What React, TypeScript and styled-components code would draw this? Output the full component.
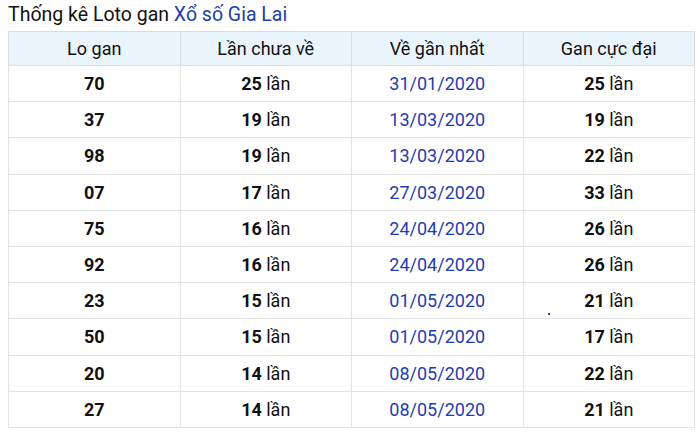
import styled, { createGlobalStyle } from 'styled-components'

const GlobalStyle = createGlobalStyle`
  body {
    margin: 0;
    background: #fff;
    font-family: Roboto, "Liberation Sans", sans-serif;
    color: #111;
  }
`

const Wrap = styled.section`
  position: relative;
  padding: 2px 5px 0 8px;
`

const Title = styled.h2`
  margin: 0 0 4px;
  font-size: 19.5px;
  font-weight: 400;
  line-height: 25px;
  color: #111;
`

const TitleLink = styled.span`
  color: #1c3faa;
`

const Table = styled.table`
  width: 687px;
  border-collapse: collapse;
  table-layout: fixed;
  font-size: 18px;
`

const HeadCell = styled.th`
  height: 33px;
  padding: 0;
  background: #eaf4fc;
  border: 1px solid #dcdcdc;
  font-weight: 400;
  text-align: center;
`

const Cell = styled.td<{ $blue?: boolean }>`
  height: 35.2px;
  padding: 0;
  border: 1px solid #e2e2e2;
  text-align: center;
  color: ${({ $blue }) => ($blue ? '#1f3cb0' : '#111')};
`

const Num = styled.b`
  font-weight: 700;
`

// stray cursor speck seen over the table
const Speck = styled.i`
  position: absolute;
  left: 548px;
  top: 313px;
  width: 2px;
  height: 2px;
  background: #3a3ad0;
`

const rows = [
  ['70', '25', '31/01/2020', '25'],
  ['37', '19', '13/03/2020', '19'],
  ['98', '19', '13/03/2020', '22'],
  ['07', '17', '27/03/2020', '33'],
  ['75', '16', '24/04/2020', '26'],
  ['92', '16', '24/04/2020', '26'],
  ['23', '15', '01/05/2020', '21'],
  ['50', '15', '01/05/2020', '17'],
  ['20', '14', '08/05/2020', '22'],
  ['27', '14', '08/05/2020', '21'],
]

export default function App() {
  return (
    <Wrap>
      <GlobalStyle />
      <Title>
        Thống kê Loto gan <TitleLink>Xổ số Gia Lai</TitleLink>
      </Title>
      <Table>
        <thead>
          <tr>
            <HeadCell>Lo gan</HeadCell>
            <HeadCell>Lần chưa về</HeadCell>
            <HeadCell>Về gần nhất</HeadCell>
            <HeadCell>Gan cực đại</HeadCell>
          </tr>
        </thead>
        <tbody>
          {rows.map(([lo, miss, date, max]) => (
            <tr key={lo}>
              <Cell>
                <Num>{lo}</Num>
              </Cell>
              <Cell>
                <Num>{miss}</Num> lần
              </Cell>
              <Cell $blue>{date}</Cell>
              <Cell>
                <Num>{max}</Num> lần
              </Cell>
            </tr>
          ))}
        </tbody>
      </Table>
      <Speck />
    </Wrap>
  )
}
